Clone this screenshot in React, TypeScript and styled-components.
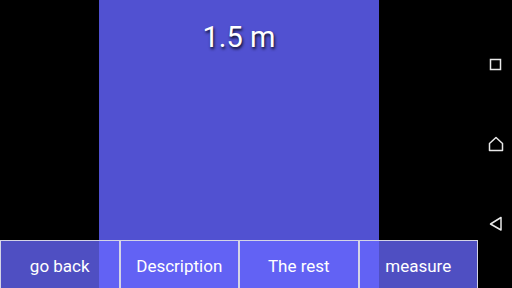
import React from "react";
import styled, { createGlobalStyle } from "styled-components";

const Global = createGlobalStyle`
  html, body { margin: 0; padding: 0; background: #000; }
  body { width: 512px; height: 288px; overflow: hidden; font-family: Roboto, "Noto Sans", sans-serif; }
`;

const Screen = styled.div`
  display: flex;
  width: 512px;
  height: 288px;
  background: #000;
`;

const Content = styled.div`
  position: relative;
  width: 478px;
  height: 288px;
  display: flex;
  justify-content: center;
`;

const Panel = styled.div`
  width: 280px;
  height: 288px;
  background: #5151d1;
  display: flex;
  justify-content: center;
  align-items: flex-start;
`;

const Reading = styled.div`
  margin-top: 20px;
  font-family: Roboto, sans-serif;
  font-size: 29px;
  color: #ffffff;
  text-shadow: 1px 2px 3px rgba(0, 0, 0, 0.85);
`;

const ButtonBar = styled.div`
  position: absolute;
  left: 0;
  right: 0;
  bottom: 0;
  height: 48px;
  display: grid;
  grid-template-columns: repeat(4, 1fr);
`;

const ActionButton = styled.button`
  margin: 0;
  padding: 2px 0 0 0;
  border: 1px solid #d4d4e6;
  border-top-width: 1.5px;
  border-bottom: none;
  background: rgba(104, 104, 255, 0.76);
  color: #ffffff;
  font-family: Roboto, sans-serif;
  font-size: 17px;
  display: flex;
  align-items: center;
  justify-content: center;
`;

const NavBar = styled.div`
  width: 34px;
  height: 288px;
  display: flex;
  flex-direction: column;
  align-items: center;
  gap: 64px;
  padding-top: 57px;
  box-sizing: border-box;
`;

const NavIcon = styled.svg`
  display: block;
  margin-left: 1px;
`;

export default function App() {
  return (
    <Screen>
      <Global />
      <Content>
        <Panel>
          <Reading>1.5 m</Reading>
        </Panel>
        <ButtonBar>
          <ActionButton>go back</ActionButton>
          <ActionButton>Description</ActionButton>
          <ActionButton>The rest</ActionButton>
          <ActionButton>measure</ActionButton>
        </ButtonBar>
      </Content>
      <NavBar>
        <NavIcon width="15" height="15" viewBox="0 0 15 15">
          <rect x="2.5" y="2.5" width="10" height="10" fill="none" stroke="#e8e8e8" strokeWidth="1.5" />
        </NavIcon>
        <NavIcon width="16" height="16" viewBox="0 0 16 16">
          <path d="M1.5 14.5 V7.5 L8 1.5 L14.5 7.5 V14.5 Z" fill="none" stroke="#e8e8e8" strokeWidth="1.5" strokeLinejoin="round" />
        </NavIcon>
        <NavIcon width="16" height="16" viewBox="0 0 16 16">
          <path d="M13 1.5 V14 L2.5 8 Z" fill="none" stroke="#e8e8e8" strokeWidth="1.5" strokeLinejoin="round" />
        </NavIcon>
      </NavBar>
    </Screen>
  );
}
